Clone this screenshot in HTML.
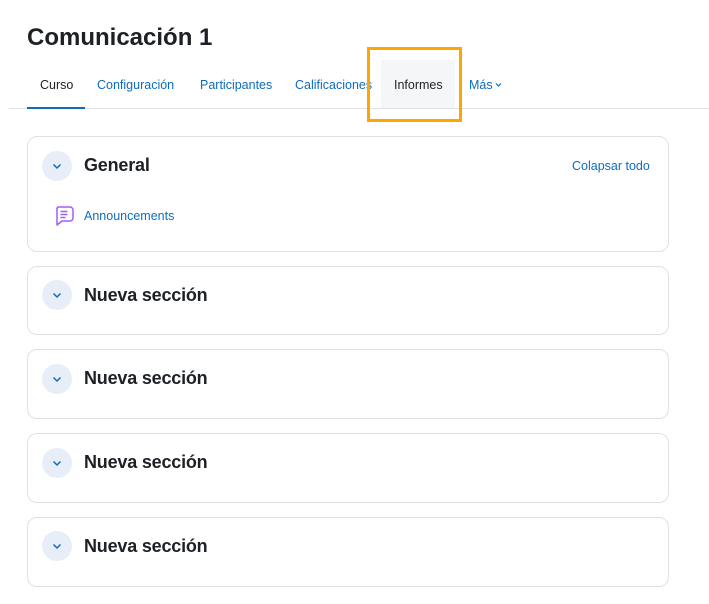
<!DOCTYPE html>
<html><head><meta charset="utf-8"><style>
*{margin:0;padding:0;box-sizing:border-box}
body{width:709px;height:604px;background:#fff;font-family:"Liberation Sans",sans-serif;position:relative;overflow:hidden;color:#1d2125}
.a{position:absolute}
h1{position:absolute;left:27px;top:24px;font-size:24px;font-weight:bold;color:#1d2125}
.tab{position:absolute;top:78px;font-size:12.5px;color:#0f6cbf}
.card{position:absolute;left:27px;width:642px;border:1px solid #dee2e6;border-radius:10px}
.circ{position:absolute;left:14px;width:30px;height:30px;border-radius:50%;background:#e7eef8}
.circ svg{position:absolute;left:10px;top:10px}
.t{position:absolute;left:56px;font-size:18px;font-weight:bold;color:#1d2125;letter-spacing:-0.2px}
</style></head><body>
<h1>Comunicación 1</h1>
<div class="a" style="left:381px;top:60px;width:74px;height:48px;background:#f5f6f8"></div>
<div class="tab" style="left:40px;color:#1d2125">Curso</div>
<div class="tab" style="left:97px">Configuración</div>
<div class="tab" style="left:200px">Participantes</div>
<div class="tab" style="left:295px">Calificaciones</div>
<div class="tab" style="left:394px;color:#1d2125">Informes</div>
<div class="tab" style="left:469px">Más</div>
<svg class="a" style="left:495px;top:82px" width="7" height="6" viewBox="0 0 7 6"><path d="M1 1.5l2.5 2.5 2.5-2.5" stroke="#0f6cbf" stroke-width="1.2" fill="none"/></svg>
<div class="a" style="left:9px;top:108px;width:700px;height:1px;background:#dee2e6"></div>
<div class="a" style="left:27px;top:107px;width:58px;height:2px;background:#0f6cbf"></div>
<div class="a" style="left:367px;top:47px;width:95px;height:75px;border:3px solid #ffa500"></div>

<div class="card" style="top:136px;height:116px">
 <div class="circ" style="top:14px"><svg width="10" height="10" viewBox="0 0 10 10"><path d="M1.5 3.5l3.5 3.5 3.5-3.5" stroke="#0f6cbf" stroke-width="1.5" fill="none"/></svg></div>
 <div class="t" style="top:18px">General</div>
 <div class="a" style="left:544px;top:22px;font-size:12.5px;color:#0f6cbf">Colapsar todo</div>
 <svg class="a" style="left:25px;top:68px" width="22" height="22" viewBox="0 0 22 22"><path d="M5 2h12a3 3 0 0 1 3 3v8a3 3 0 0 1-3 3H9l-5 4V5a3 3 0 0 1 1-3z" stroke="#a15ef5" stroke-width="1.5" fill="none" stroke-linejoin="round"/><path d="M7.5 6.5h7M7.5 9.5h7M7.5 12.5h5" stroke="#a15ef5" stroke-width="1.4"/></svg>
 <div class="a" style="left:56px;top:72px;font-size:12.5px;color:#0f6cbf">Announcements</div>
</div>
<div class="card" style="top:266px;height:69px"><div class="circ" style="top:13px"><svg width="10" height="10" viewBox="0 0 10 10"><path d="M1.5 3.5l3.5 3.5 3.5-3.5" stroke="#0f6cbf" stroke-width="1.5" fill="none"/></svg></div><div class="t" style="top:18px">Nueva sección</div></div>
<div class="card" style="top:349px;height:70px"><div class="circ" style="top:14px"><svg width="10" height="10" viewBox="0 0 10 10"><path d="M1.5 3.5l3.5 3.5 3.5-3.5" stroke="#0f6cbf" stroke-width="1.5" fill="none"/></svg></div><div class="t" style="top:18px">Nueva sección</div></div>
<div class="card" style="top:433px;height:70px"><div class="circ" style="top:14px"><svg width="10" height="10" viewBox="0 0 10 10"><path d="M1.5 3.5l3.5 3.5 3.5-3.5" stroke="#0f6cbf" stroke-width="1.5" fill="none"/></svg></div><div class="t" style="top:18px">Nueva sección</div></div>
<div class="card" style="top:517px;height:70px"><div class="circ" style="top:13px"><svg width="10" height="10" viewBox="0 0 10 10"><path d="M1.5 3.5l3.5 3.5 3.5-3.5" stroke="#0f6cbf" stroke-width="1.5" fill="none"/></svg></div><div class="t" style="top:18px">Nueva sección</div></div>
</body></html>
